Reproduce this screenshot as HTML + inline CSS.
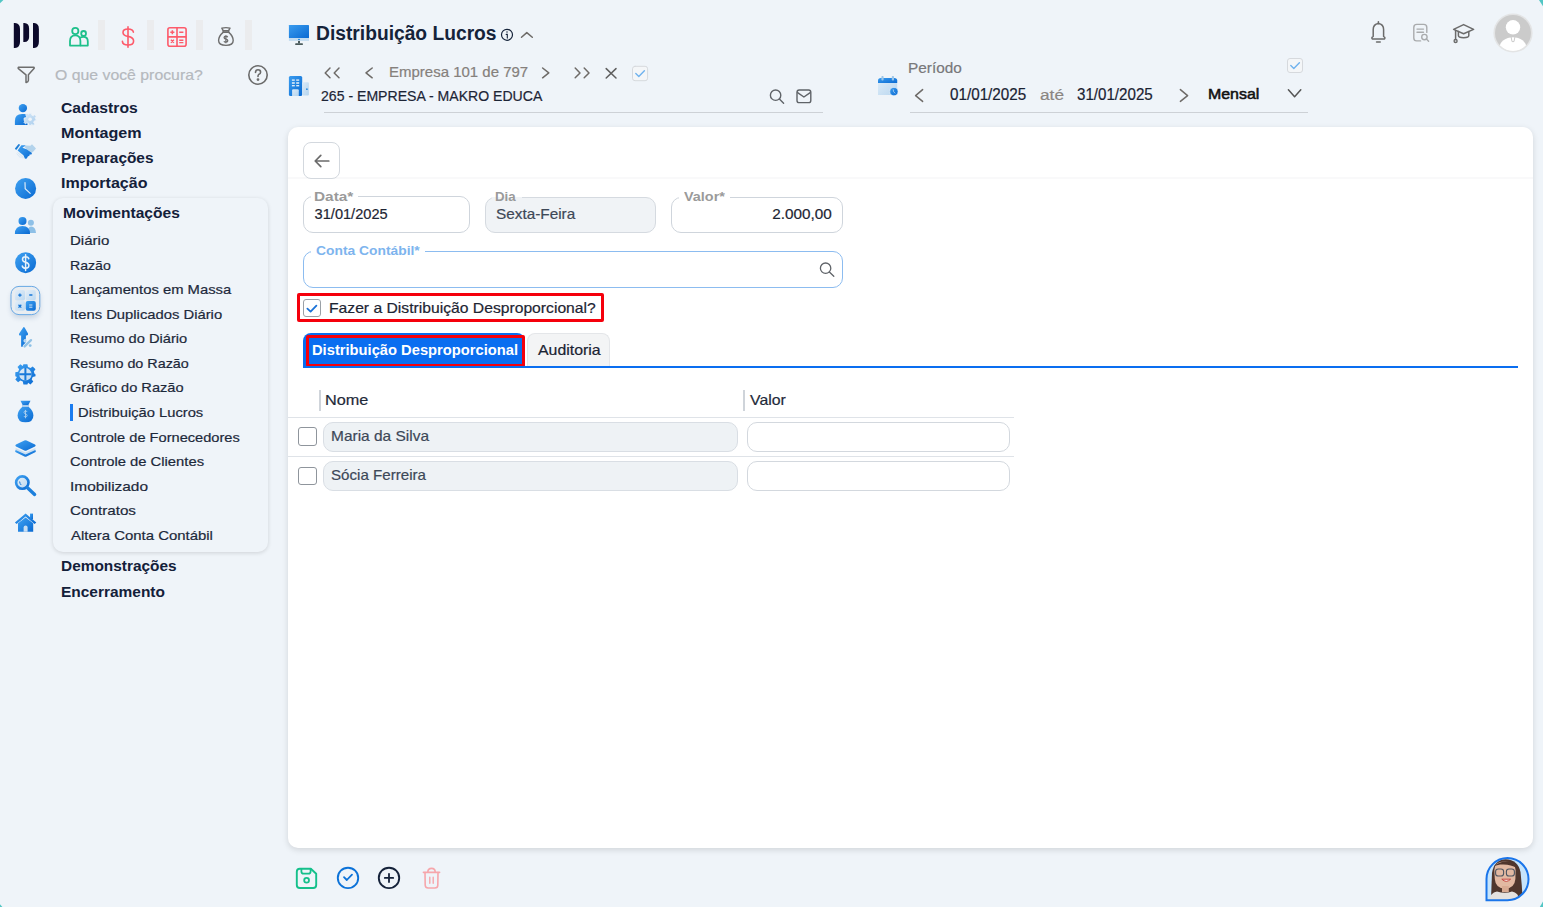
<!DOCTYPE html>
<html><head><meta charset="utf-8"><title>Distribuição Lucros</title>
<style>
html,body{margin:0;padding:0;}
body{width:1543px;height:907px;overflow:hidden;position:relative;background:#eff4f9;font-family:"Liberation Sans",sans-serif;}
.tx{position:absolute;white-space:nowrap;}
.r{-webkit-text-stroke:0.2px currentColor;}
.ab{position:absolute;}
svg.ab{overflow:visible;}
.sep{position:absolute;top:20px;width:7px;height:30px;background:#ebecee;}
.panel{position:absolute;left:53px;top:198px;width:215px;height:354px;border-radius:10px;background:#eff4f9;box-shadow:0 1px 4px rgba(0,0,0,.14);}
.card{position:absolute;left:288px;top:126.5px;width:1245px;height:721.5px;background:#fff;border-radius:10px;box-shadow:0 2px 6px rgba(0,0,0,.13);}
.fld{position:absolute;box-sizing:border-box;border:1px solid #cfd5dc;border-radius:10px;background:#fff;}
.lbl{position:absolute;height:6px;background:#fff;}
.rowline{position:absolute;left:288px;width:726px;height:1px;background:#dfe3e8;}
.chk{position:absolute;box-sizing:border-box;width:18px;height:18px;border:1px solid #8f959c;border-radius:3px;background:#fff;}

</style></head><body>
<!-- corner teal marks -->
<svg class="ab" style="left:0;top:0;z-index:5" width="1543" height="907" viewBox="0 0 1543 907">
  <path d="M0 0 L3.4 0 L0 3.2 Z" fill="#52c6c4"/>
  <path d="M1539 0 L1543 0 L1543 6.2 Z" fill="#52c6c4"/>
  <path d="M0 904.2 L2.4 907 L0 907 Z" fill="#52c6c4"/>
  <path d="M1543 901.6 L1543 907 L1539.8 907 Z" fill="#52c6c4"/>
</svg>
<!-- logo -->
<svg class="ab" style="left:0;top:0" width="60" height="60" viewBox="0 0 60 60">
  <path d="M13.8 22.9 L15 22.9 Q20 23.3 20 29 L20 42 Q20 47.6 15 48 L13.8 48 Z" fill="#0c0a2b"/>
  <path d="M23.3 22.9 L24.4 22.9 Q29.1 23.3 29.1 28.5 L29.1 37 Q29.1 41.7 24.4 42.1 L23.3 42.1 Z" fill="#0c0a2b"/>
  <path d="M33 22.9 L34.2 22.9 Q38.9 23.3 38.9 29 L38.9 42 Q38.9 47.6 34.2 48 L33 48 Z" fill="#0c0a2b"/>
</svg>
<!-- top module icons -->
<div class="sep" style="left:98px"></div>
<div class="sep" style="left:147px"></div>
<div class="sep" style="left:196px"></div>
<div class="sep" style="left:245px"></div>
<svg class="ab" style="left:66px;top:24px" width="26" height="26" viewBox="0 0 26 26" fill="none" stroke="#1ec08b" stroke-width="1.8" stroke-linejoin="round">
  <circle cx="9.3" cy="7" r="3.1"/>
  <circle cx="17.6" cy="9.4" r="2.4"/>
  <path d="M4 21.6 L4 17 Q4 11.4 9.3 11.4 Q14.4 11.4 14.4 17 L14.4 21.6 Z"/>
  <path d="M14.1 13.8 Q15 12.9 17.4 12.9 Q21.8 12.9 21.8 17.4 L21.8 21.6 L14.4 21.6"/>
</svg>
<svg class="ab" style="left:118px;top:25px" width="20" height="24" viewBox="0 0 20 24" fill="none" stroke="#fd5b6b" stroke-width="1.6" stroke-linecap="round">
  <path d="M10 1.9 L10 22.2"/>
  <path d="M15.4 7.2 Q15 4 10 4 Q5 4 5 7.4 Q5 10.4 10 11.4 Q15.6 12.5 15.6 15.9 Q15.6 20 10 20 Q4.6 20 4.4 16.4"/>
</svg>
<svg class="ab" style="left:166px;top:26px" width="22" height="22" viewBox="0 0 22 22" fill="none" stroke="#fd5b6b" stroke-width="1.6">
  <rect x="1.9" y="1.7" width="18.2" height="18.5" rx="2"/>
  <path d="M11 1.7 V20.2 M1.9 10.9 H20.1"/>
  <path d="M4.3 6.3 H8.4 M6.35 4.3 V8.3 M13.2 6.3 H17.4" stroke-width="1.5"/>
  <path d="M4.9 13.7 L7.9 16.7 M7.9 13.7 L4.9 16.7 M13.2 14.2 H17.4 M13.2 16.6 H17.4" stroke-width="1.4"/>
</svg>
<svg class="ab" style="left:216px;top:26px" width="20" height="22" viewBox="0 0 20 22" fill="none" stroke="#6e6e6e" stroke-width="1.4" stroke-linejoin="round">
  <path d="M5.8 2.2 Q10 1 14 2.2 L12.6 4.7 L7.2 4.7 Z"/>
  <path d="M7.2 4.7 L12.6 4.7 L12.8 6.4 L7.1 6.4 Z"/>
  <path d="M7.1 6.4 Q2.6 10.2 2.6 14.6 Q2.6 19.4 10 19.4 Q17.2 19.4 17.2 14.6 Q17.2 10.2 12.8 6.4"/>
  <path d="M11.7 11.2 Q11.3 10.2 9.9 10.2 Q8.1 10.2 8.1 11.6 Q8.1 12.8 9.9 13.1 Q11.8 13.4 11.8 14.8 Q11.8 16.2 9.9 16.2 Q8.3 16.2 8 15.2 M9.9 9.2 V17.2" stroke-width="1.3"/>
</svg>
<!-- filter + help -->
<svg class="ab" style="left:14px;top:63px" width="24" height="24" viewBox="0 0 24 24" fill="none" stroke="#6e6e6e" stroke-width="1.5" stroke-linejoin="round">
  <path d="M4.6 4.2 L19.6 4.2 Q20.6 4.4 20 5.6 L14.4 11.8 L14.4 17.4 Q14.2 19.2 12.4 19.4 L12 19.4 L12 11.8 L4.4 5.6 Q3.8 4.6 4.6 4.2 Z"/>
</svg>
<svg class="ab" style="left:246px;top:63px" width="24" height="24" viewBox="0 0 24 24" fill="none" stroke="#6a6a6a" stroke-width="1.6" stroke-linecap="round">
  <circle cx="12" cy="12" r="9.2"/>
  <path d="M9.5 9.4 Q9.6 6.8 12 6.8 Q14.6 6.8 14.6 9.2 Q14.6 10.8 12.6 11.6 Q12 12 12 13.4"/>
  <circle cx="12" cy="16.6" r="0.6" fill="#6a6a6a"/>
</svg>

<!-- submenu panel -->
<div class="panel"></div>
<div class="ab" style="left:70px;top:404px;width:3px;height:17px;background:#1a7cf0"></div>
<!-- sidebar icons -->
<svg class="ab" style="left:0;top:90px" width="50" height="450" viewBox="0 90 50 450">
  <defs>
    <linearGradient id="gb" x1="0" y1="0" x2="1" y2="1">
      <stop offset="0" stop-color="#40a2f2"/><stop offset="1" stop-color="#0a6ad2"/>
    </linearGradient>
    <linearGradient id="gl" x1="0" y1="0" x2="1" y2="1">
      <stop offset="0" stop-color="#d8e9f7"/><stop offset="1" stop-color="#a9cdee"/>
    </linearGradient>
    <linearGradient id="gc" x1="0" y1="0" x2="1" y2="1">
      <stop offset="0" stop-color="#e3eef8"/><stop offset="1" stop-color="#bcd8f0"/>
    </linearGradient>
  </defs>
  <!-- user gear -->
  <circle cx="22.9" cy="108.1" r="4.2" fill="url(#gb)"/>
  <path d="M14.9 125 L14.9 121 Q14.9 114 22 114 L27.5 114 L27.5 125 Z" fill="url(#gb)"/>
  <g transform="translate(30.1 119.3)">
    <path d="M-1.3 -6 L1.3 -6 L1.6 -4.2 L3.2 -3.5 L4.6 -4.6 L6.1 -3 L5 -1.6 L5.6 0 L6 0 L6 1.3 L4.2 1.6 L3.5 3.2 L4.6 4.6 L3 6.1 L1.6 5 L1.3 6 L-1.3 6 L-1.6 4.2 L-3.2 3.5 L-4.6 4.6 L-6.1 3 L-5 1.6 L-6 1.3 L-6 -1.3 L-4.2 -1.6 L-3.5 -3.2 L-4.6 -4.6 L-3 -6.1 L-1.6 -5 Z" fill="url(#gl)" stroke="#eff4f9" stroke-width="0.8"/>
    <circle r="1.8" fill="#eff4f9"/>
  </g>
  <!-- handshake -->
  <path d="M24 146.6 L26 145.4 L30.4 145.8 L32 144.2 L36 148.4 L33.4 151.4 L31.8 152.8 L27 149.4 Z" fill="#b3d3ec"/>
  <path d="M14.9 148.4 L18.6 144 L20.2 144.8 L16.8 149.6 Q15.4 149.8 14.9 148.4 Z" fill="#1f7fd6"/>
  <path d="M17.6 150.6 L20.4 146.4 L21.4 145.2 L25.8 145.2 L22.4 147.8 L26.6 149.2 L32 153 L31.4 154.4 L29.6 154.4 L29.4 155.8 L27.8 156.4 L26.8 158.6 L25 158.8 L23.4 155.2 Z" fill="url(#gb)"/>
  <path d="M17.4 152.4 L22.8 158.4 M19.2 152.6 L23.6 157.6 M16.6 153.6 L20.4 157.8" stroke="#cfe2f3" stroke-width="0.9" opacity="0.8"/>
  <!-- clock -->
  <circle cx="25.6" cy="188.4" r="10.5" fill="url(#gb)"/>
  <path d="M25 182.6 L25.2 188.8 L30.2 193.4" fill="none" stroke="#dceaf7" stroke-width="1.2" stroke-linecap="round"/>
  <!-- people -->
  <circle cx="30.9" cy="222.7" r="3" fill="#8ec0e7"/>
  <path d="M28 233 L28 230 Q28.8 226.6 31.2 226.6 Q35.6 226.8 36 233 Z" fill="#8ec0e7"/>
  <circle cx="22.5" cy="220.9" r="4" fill="url(#gb)"/>
  <path d="M14.9 234 Q14.9 226 22.5 226 Q30 226 30 234 Z" fill="url(#gb)"/>
  <!-- dollar -->
  <circle cx="25.6" cy="262.7" r="10.5" fill="url(#gb)"/>
  <path d="M28.8 258.8 Q28.3 256.8 25.6 256.8 Q22.5 256.8 22.5 259.3 Q22.5 261.6 25.6 262.3 Q28.9 263 28.9 265.5 Q28.9 268.2 25.6 268.2 Q22.7 268.2 22.3 266 M25.6 254.8 V270.4" fill="none" stroke="#e7f1fa" stroke-width="1.5" stroke-linecap="round"/>
  <!-- calculator active -->
  <rect x="11" y="286.4" width="28.8" height="28.2" rx="8" fill="#e9edf1" stroke="#6aaae6" stroke-width="1"/>
  <rect x="14.9" y="290.1" width="10.1" height="10.3" rx="2" fill="url(#gc)"/>
  <rect x="25.7" y="290.1" width="10.1" height="10.3" rx="2" fill="url(#gc)"/>
  <rect x="14.9" y="300.9" width="10.1" height="9.8" rx="2" fill="url(#gc)"/>
  <rect x="25.7" y="300.9" width="10.1" height="9.8" rx="2" fill="url(#gb)"/>
  <path d="M18.2 295.1 H21.6 M19.9 293.4 V296.8 M29.2 295 H32.4 M18.5 304.8 L21.3 307.6 M21.3 304.8 L18.5 307.6" stroke="#1677d8" stroke-width="1.3"/>
  <path d="M29.2 305 H32.4 M29.2 307.2 H32.4" stroke="#cfe3f6" stroke-width="1"/>
  <!-- arrow percent -->
  <path d="M23.4 327.2 Q24 326.8 24.6 327.6 L28 333.6 Q28.6 335.6 26.6 335.6 L25.9 335.6 L25.9 346.8 L21.1 346.8 L21.1 335.6 L20.4 335.6 Q18.4 335.6 19.2 333.6 Z" fill="url(#gb)"/>
  <path d="M24.6 346.4 L31 340.2" stroke="#eff4f9" stroke-width="3.8" stroke-linecap="round"/>
  <path d="M24.6 346.4 L31 340.2" stroke="#92c2e6" stroke-width="2.4" stroke-linecap="round"/>
  <circle cx="25.3" cy="340.8" r="1.5" fill="#a9cfec" stroke="#eff4f9" stroke-width="0.6"/>
  <circle cx="30.2" cy="345.6" r="1.4" fill="#8cc0e6"/>
  <!-- gear plus -->
  <g transform="translate(25.4 374.3)">
    <path d="M-2 -10.1 L2 -10.1 L2.6 -7.2 L5.1 -6.2 L7.3 -7.9 L10.1 -5.1 L8.4 -2.7 L9.3 -0.3 L10.1 0 L10.1 2 L7.3 2.6 L6.3 5.1 L7.9 7.3 L5.1 10.1 L2.7 8.4 L2 10.1 L-2 10.1 L-2.6 7.3 L-5.1 6.3 L-7.3 7.9 L-10.1 5.1 L-8.4 2.7 L-10.1 2 L-10.1 -2 L-7.3 -2.6 L-6.3 -5.1 L-7.9 -7.3 L-5.1 -10.1 L-2.7 -8.4 Z" fill="url(#gb)"/>
    <circle r="6.2" fill="url(#gc)"/>
    <path d="M-6.2 0 H6.2 M0 -6.2 V6.2" stroke="#1a7ad9" stroke-width="2"/>
  </g>
  <!-- money bag -->
  <path d="M20.5 400.8 L30.5 400.8 L28.4 405 L22.6 405 Z" fill="url(#gb)"/>
  <rect x="22" y="405" width="7" height="2" fill="#a9cdee"/>
  <path d="M22.2 407 L28.8 407 Q33.4 411 33.4 415.4 Q33.4 422.2 25.5 422.2 Q17.6 422.2 17.6 415.4 Q17.6 411 22.2 407 Z" fill="url(#gb)"/>
  <path d="M27.1 412 Q26.8 411 25.5 411 Q24 411 24 412.4 Q24 413.5 25.5 413.9 Q27.1 414.3 27.1 415.6 Q27.1 416.9 25.5 416.9 Q24.1 416.9 23.9 416 M25.5 409.9 V418.3" fill="none" stroke="#b9d7f0" stroke-width="0.8"/>
  <!-- layers -->
  <path d="M16.2 449.6 L25.5 454 L34.8 449.6 L35.6 450.6 Q36.4 451.6 35.2 452.2 L26.6 456.4 Q25.5 456.9 24.4 456.4 L15.8 452.2 Q14.6 451.6 15.4 450.6 Z" fill="url(#gb)"/>
  <path d="M15.6 448 L25.5 452.6 L35.4 448 L35.4 450 L25.5 454.4 L15.6 450 Z" fill="#c9def1"/>
  <path d="M16 444.6 L24.4 440.4 Q25.5 439.9 26.6 440.4 L35 444.6 Q36.4 445.5 35 446.4 L26.6 450.5 Q25.5 451 24.4 450.5 L16 446.4 Q14.6 445.5 16 444.6 Z" fill="url(#gb)"/>
  <!-- search -->
  <circle cx="22.3" cy="482.6" r="6.2" fill="url(#gc)" stroke="url(#gb)" stroke-width="2.6"/>
  <path d="M27.2 487.6 L34.6 494.4" stroke="#1c7fdc" stroke-width="3.4" stroke-linecap="round"/>
  <path d="M19.6 481.5 Q19.8 483.8 21.2 485" stroke="#1a7ad9" stroke-width="1" fill="none"/>
  <!-- home -->
  <path d="M14.9 522.4 L25.6 513.5 L36.3 522.4 L34.6 523.9 L25.6 516.6 L16.6 523.9 Z" fill="url(#gb)"/>
  <rect x="30" y="513.6" width="3" height="5.6" fill="url(#gb)"/>
  <path d="M18 523.3 L25.6 517.6 L33.2 523.3 L33.2 531.7 L18 531.7 Z" fill="url(#gb)"/>
  <path d="M23.6 531.7 L23.6 527.5 Q23.6 525.6 25.6 525.6 Q27.6 525.6 27.6 527.5 L27.6 531.7 Z" fill="#c9def2"/>
</svg>
<div class="ab" style="left:11px;top:287px;width:29px;height:28px;border-radius:8px;box-shadow:0 3px 5px rgba(40,80,130,.18);z-index:-0"></div>
<!-- header: title icons -->
<svg class="ab" style="left:280px;top:15px" width="270" height="110" viewBox="280 15 270 110">
  <defs>
    <linearGradient id="gb2" x1="0" y1="0" x2="1" y2="1">
      <stop offset="0" stop-color="#3a9cef"/><stop offset="1" stop-color="#0a6ad2"/>
    </linearGradient>
    <linearGradient id="gl2" x1="0" y1="0" x2="1" y2="1">
      <stop offset="0" stop-color="#dcebf8"/><stop offset="1" stop-color="#b3d3ee"/>
    </linearGradient>
  </defs>
  <!-- monitor -->
  <rect x="288.9" y="24.9" width="20.1" height="13.1" rx="0.6" fill="url(#gb2)"/>
  <rect x="288.9" y="38" width="20.1" height="2.9" fill="#c3dcf0"/>
  <ellipse cx="299" cy="39.4" rx="1.1" ry="0.6" fill="#2a8ce0"/>
  <rect x="298" y="40.9" width="2" height="2.5" fill="#4b5b5c"/>
  <rect x="295.2" y="43.2" width="7.7" height="1.8" rx="0.6" fill="#4b5b5c"/>
  <!-- info -->
  <circle cx="507" cy="34.8" r="5.5" fill="none" stroke="#15233a" stroke-width="1.2"/>
  <circle cx="507" cy="32.1" r="0.75" fill="#15233a"/>
  <path d="M506.2 34.4 L507.3 34.4 L507.3 38.1" fill="none" stroke="#15233a" stroke-width="1.1" stroke-linecap="round"/>
  <!-- chevron up -->
  <path d="M521.5 37.3 L526.8 32.6 L532.3 37.3" fill="none" stroke="#6e6b68" stroke-width="1.5" stroke-linecap="round" stroke-linejoin="round"/>
  <!-- building -->
  <rect x="288.9" y="76" width="13.3" height="19.9" rx="1.5" fill="url(#gb2)"/>
  <rect x="302.2" y="82.2" width="6.7" height="13.2" rx="1" fill="url(#gl2)"/>
  <circle cx="306.9" cy="89.2" r="0.9" fill="#2a8ce0"/>
  <g fill="#dcebf8">
    <rect x="291.9" y="79.4" width="2.9" height="1.4"/><rect x="296.2" y="79.4" width="3" height="1.4"/>
    <rect x="291.9" y="82.2" width="2.9" height="1.6"/><rect x="296.2" y="82.2" width="3" height="1.6"/>
    <rect x="291.9" y="85" width="2.9" height="1.4"/><rect x="296.2" y="85" width="3" height="1.4"/>
  </g>
  <path d="M292.1 95.9 L292.1 90.3 Q292.1 89.2 293.2 89.2 L297.7 89.2 Q298.8 89.2 298.8 90.3 L298.8 95.9 Z" fill="url(#gl2)"/>
</svg>
<!-- empresa nav icons -->
<svg class="ab" style="left:315px;top:60px" width="520" height="60" viewBox="315 60 520 60" fill="none" stroke="#6e6b68" stroke-width="1.5" stroke-linecap="round" stroke-linejoin="round">
  <path d="M330 68 L325.2 72.9 L330 77.8 M339 68 L334.2 72.9 L339 77.8"/>
  <path d="M372.2 68 L366 72.9 L372.2 77.8"/>
  <path d="M542.6 68 L548.8 72.9 L542.6 77.8"/>
  <path d="M575.2 68 L580 72.9 L575.2 77.8 M584.2 68 L589 72.9 L584.2 77.8"/>
  <path d="M606.2 68.6 L616 78 M616 68.6 L606.2 78" stroke="#5f5f5f"/>
  <rect x="632.5" y="66.3" width="15.1" height="14.4" rx="2.5" stroke="#d6d9dd" stroke-width="1" fill="#f4f6f8"/>
  <path d="M635.8 73.6 L638.8 76.4 L644.4 70.8" stroke="#6fb2ee" stroke-width="1.4"/>
  <!-- search -->
  <circle cx="775.6" cy="95.2" r="5.2" stroke="#5f6368" stroke-width="1.4"/>
  <path d="M779.4 99 L783.6 103.2" stroke="#5f6368" stroke-width="1.4"/>
  <!-- mail -->
  <rect x="797" y="90" width="13.8" height="12.6" rx="2.2" stroke="#5f6368" stroke-width="1.4"/>
  <path d="M797.6 92.6 L803.9 97 L810.2 92.6" stroke="#5f6368" stroke-width="1.4"/>
</svg>
<div class="ab" style="left:324px;top:112px;width:499px;height:1px;background:#cdd1d6"></div>

<!-- periodo -->
<svg class="ab" style="left:870px;top:50px" width="450" height="70" viewBox="870 50 450 70">
  <defs>
    <linearGradient id="gb3" x1="0" y1="0" x2="1" y2="1">
      <stop offset="0" stop-color="#3a9cef"/><stop offset="1" stop-color="#0a6ad2"/>
    </linearGradient>
    <linearGradient id="gl3" x1="0" y1="0" x2="1" y2="1">
      <stop offset="0" stop-color="#e0eef9"/><stop offset="1" stop-color="#b9d6ef"/>
    </linearGradient>
  </defs>
  <path d="M878 94.9 L878 81 Q878 77.9 881 77.9 L894.2 77.9 Q897.2 77.9 897.2 81 L897.2 94.9 Z" fill="url(#gl3)"/>
  <path d="M878 83.1 L878 80.6 Q878 77.9 881 77.9 L894.2 77.9 Q897.2 77.9 897.2 80.6 L897.2 83.1 Z" fill="url(#gb3)"/>
  <rect x="881.4" y="76" width="2.2" height="4.6" rx="0.8" fill="#9cc6e8"/>
  <rect x="891.8" y="76" width="2.2" height="4.6" rx="0.8" fill="#9cc6e8"/>
  <circle cx="893.9" cy="91.6" r="4.1" fill="url(#gb3)" stroke="#eff4f9" stroke-width="0.6"/>
  <path d="M893.2 89.4 L893.6 91.6 L895.2 93.4" fill="none" stroke="#cfe3f6" stroke-width="0.7"/>
  <g fill="none" stroke="#6e6b68" stroke-width="1.5" stroke-linecap="round" stroke-linejoin="round">
    <path d="M922.6 89.6 L915.6 95.6 L922.6 101.4"/>
    <path d="M1180.4 89.6 L1187.6 95.6 L1180.4 101.4"/>
    <path d="M1288.4 89.8 L1294.6 96.8 L1300.8 89.8" stroke="#555"/>
  </g>
  <rect x="1287.5" y="58.5" width="15" height="14" rx="2.5" stroke="#d6d9dd" stroke-width="1" fill="#f4f6f8"/>
  <path d="M1290.8 65.6 L1293.8 68.4 L1299.4 62.8" fill="none" stroke="#6fb2ee" stroke-width="1.4" stroke-linecap="round" stroke-linejoin="round"/>
</svg>
<div class="ab" style="left:910px;top:112px;width:398px;height:1px;background:#cdd1d6"></div>

<!-- right top icons -->
<svg class="ab" style="left:1360px;top:10px" width="180" height="50" viewBox="1360 10 180 50" fill="none" stroke-linecap="round" stroke-linejoin="round">
  <!-- bell -->
  <path d="M1373.2 36.4 L1373.2 29.6 Q1373.2 24 1378.4 23.4 Q1383.6 24 1383.6 29.6 L1383.6 36.4 Q1385.6 37.6 1384.6 38.9 L1372.2 38.9 Q1371.2 37.6 1373.2 36.4 Z" stroke="#6b6b6b" stroke-width="1.5"/>
  <path d="M1378.4 21.8 L1378.4 23.4 M1376.6 42 L1380.2 42" stroke="#6b6b6b" stroke-width="1.6"/>
  <!-- doc search -->
  <path d="M1420.6 40.9 L1416.6 40.9 Q1413.8 40.9 1413.8 38 L1413.8 27.4 Q1413.8 24.4 1416.8 24.4 L1423.8 24.4 Q1426.8 24.4 1426.8 27.4 L1426.8 32.4" stroke="#a9abad" stroke-width="1.4"/>
  <path d="M1417 29.1 L1423.5 29.1 M1417 32.2 L1423.5 32.2" stroke="#a9abad" stroke-width="1.4"/>
  <circle cx="1424.4" cy="37.1" r="2.7" stroke="#a9abad" stroke-width="1.4"/>
  <path d="M1426.4 39.1 L1428.6 41.3" stroke="#a9abad" stroke-width="1.4"/>
  <!-- grad cap -->
  <path d="M1453.6 29.4 L1463.6 24.6 L1473.6 29.4 L1463.6 33.8 Z" stroke="#6b6b6b" stroke-width="1.5"/>
  <path d="M1458.4 31.6 L1458.4 35.6 Q1458.4 37.8 1463.6 37.8 Q1468.8 37.8 1468.8 35.6 L1468.8 31.6" stroke="#6b6b6b" stroke-width="1.5"/>
  <path d="M1455.6 30.4 L1455.6 39.6" stroke="#6b6b6b" stroke-width="1.5"/>
  <circle cx="1455.6" cy="41" r="1.5" stroke="#6b6b6b" stroke-width="1.4"/>
</svg>
<!-- avatar -->
<svg class="ab" style="left:1490px;top:10px" width="46" height="46" viewBox="1490 10 46 46">
  <defs><clipPath id="avc"><circle cx="1513" cy="33" r="18"/></clipPath></defs>
  <circle cx="1513" cy="33" r="19.6" fill="#e3e4e5"/>
  <circle cx="1513" cy="33" r="18" fill="#cbcbcb"/>
  <g clip-path="url(#avc)">
    <circle cx="1513" cy="27.3" r="7.2" fill="#fff"/>
    <ellipse cx="1513" cy="47.4" rx="13.4" ry="10.2" fill="#fff"/>
    <path d="M1511 36.4 L1512 41.6 L1514 41.6 L1515 36.4" fill="none" stroke="#cbcbcb" stroke-width="1"/>
  </g>
</svg>
<!-- main card -->
<div class="card"></div>
<div class="ab" style="left:288px;top:177px;width:1245px;height:2px;background:#f9f9fa"></div>
<!-- back button -->
<div class="ab" style="left:303px;top:142px;width:37px;height:37px;box-sizing:border-box;border:1px solid #d3d8de;border-radius:8px;background:#fff"></div>
<svg class="ab" style="left:303px;top:142px" width="37" height="37" viewBox="303 142 37 37" fill="none" stroke="#6b6b6b" stroke-width="1.7" stroke-linecap="round" stroke-linejoin="round">
  <path d="M328.8 161 L315.4 161 M320.8 155.4 L315.2 161 L320.8 166.6"/>
</svg>
<!-- fields -->
<div class="fld" style="left:303px;top:196px;width:167px;height:37px"></div>
<div class="lbl" style="left:310.5px;top:193px;width:47px"></div>
<div class="fld" style="left:485px;top:196.5px;width:171px;height:36px;background:#f0f3f6;border-color:#d5dae0"></div>
<div class="lbl" style="left:492px;top:193px;width:30px;background:#fff;height:4px"></div>
<div class="ab" style="left:492px;top:196.5px;width:30px;height:3px;background:#f0f3f6"></div>
<div class="fld" style="left:671px;top:196.5px;width:172px;height:36px"></div>
<div class="lbl" style="left:678.5px;top:193px;width:51px"></div>
<div class="fld" style="left:303px;top:251px;width:540px;height:37px;border-color:#8cbcf0"></div>
<div class="lbl" style="left:310.5px;top:248px;width:114px"></div>
<svg class="ab" style="left:815px;top:258px" width="24" height="24" viewBox="815 258 24 24" fill="none" stroke="#5f6368" stroke-width="1.3" stroke-linecap="round">
  <circle cx="825.6" cy="268.2" r="5.2"/>
  <path d="M829.4 272 L833.8 276.2"/>
</svg>
<!-- red box + checkbox -->
<div class="ab" style="left:297px;top:293px;width:307px;height:29px;box-sizing:border-box;border:3px solid #f5000c;border-radius:2px"></div>
<div class="ab" style="left:303.3px;top:299.3px;width:17.5px;height:18px;box-sizing:border-box;border:1px solid #9aa0a6;border-radius:3px;background:#fff"></div>
<svg class="ab" style="left:303px;top:299px" width="18" height="18" viewBox="303 299 18 18" fill="none" stroke="#1a72d8" stroke-width="1.8" stroke-linecap="round" stroke-linejoin="round">
  <path d="M307.4 308.6 L310.6 311.6 L316.4 305.6"/>
</svg>
<!-- tabs -->
<div class="ab" style="left:303px;top:333px;width:222px;height:34px;background:#0a6ef0;border-radius:8px 8px 0 0"></div>
<div class="ab" style="left:306px;top:335px;width:219px;height:31.5px;box-sizing:border-box;border:3px solid #f5000c;border-radius:2px"></div>
<div class="ab" style="left:527px;top:333px;width:83px;height:33px;box-sizing:border-box;background:#f3f4f5;border:1px solid #e4e6e9;border-bottom:none;border-radius:8px 8px 0 0"></div>
<div class="ab" style="left:303px;top:366px;width:1215px;height:2px;background:#0a6ef0"></div>
<!-- table -->
<div class="ab" style="left:319.2px;top:390px;width:2px;height:21px;background:#cfd4da"></div>
<div class="ab" style="left:743.2px;top:390px;width:2px;height:21px;background:#cfd4da"></div>
<div class="rowline" style="top:417px"></div>
<div class="rowline" style="top:456px"></div>
<div class="chk" style="left:298.2px;top:427.2px;width:18.6px;height:18.4px"></div>
<div class="chk" style="left:298.2px;top:466.7px;width:18.6px;height:18.4px"></div>
<div class="fld" style="left:323px;top:422px;width:415px;height:30px;background:#eef2f5;border-color:#d9dee4;border-radius:10px"></div>
<div class="fld" style="left:323px;top:461px;width:415px;height:30px;background:#eef2f5;border-color:#d9dee4;border-radius:10px"></div>
<div class="fld" style="left:747px;top:422px;width:263px;height:30px;border-color:#d3d8de;border-radius:10px"></div>
<div class="fld" style="left:747px;top:461px;width:263px;height:30px;border-color:#d3d8de;border-radius:10px"></div>

<!-- bottom toolbar -->
<svg class="ab" style="left:290px;top:860px" width="160" height="37" viewBox="290 860 160 37" fill="none" stroke-linecap="round" stroke-linejoin="round">
  <path d="M299.8 868.8 L310.8 868.8 L316.2 873.8 L316.2 885 Q316.2 888 313.2 888 L299.8 888 Q296.8 888 296.8 885 L296.8 871.8 Q296.8 868.8 299.8 868.8 Z" stroke="#15c08b" stroke-width="1.9"/>
  <path d="M301.4 868.8 L301.4 871.4 Q301.4 873.6 303.6 873.6 L308.4 873.6 Q310.6 873.6 310.6 871.4 L310.6 868.8" stroke="#15c08b" stroke-width="1.8"/>
  <circle cx="306.6" cy="880.2" r="2.4" stroke="#15c08b" stroke-width="1.8"/>
  <circle cx="348" cy="877.9" r="10.2" stroke="#0c72d8" stroke-width="1.9"/>
  <path d="M344 877.2 L346.8 880 L352 874.6" stroke="#0c72d8" stroke-width="1.8"/>
  <circle cx="389" cy="877.9" r="10.2" stroke="#15223a" stroke-width="1.9"/>
  <path d="M384.8 877.9 L393.2 877.9 M389 873.8 L389 882.1" stroke="#15223a" stroke-width="1.8"/>
  <path d="M423.4 872.4 L439.6 872.4" stroke="#f6a6ab" stroke-width="1.6"/>
  <path d="M427.8 872.2 Q427.8 868.4 431.6 868.4 Q435.2 868.4 435.2 872.2" stroke="#f6a6ab" stroke-width="1.6"/>
  <path d="M425 872.6 L425.2 885.2 Q425.4 888 428.2 888 L434.8 888 Q437.8 888 437.8 885.2 L438 872.6" stroke="#f6a6ab" stroke-width="1.6"/>
  <path d="M429.8 877.2 L429.8 883.2 M433.2 877.2 L433.2 883.2" stroke="#f6a6ab" stroke-width="1.4"/>
</svg>
<!-- chat avatar -->
<svg class="ab" style="left:1480px;top:850px" width="56" height="56" viewBox="1480 850 56 56">
  <defs><clipPath id="chc"><path d="M1486.5 900.2 L1486.5 879 A21 21.1 0 1 1 1507.5 900.2 Z"/></clipPath></defs>
  <path d="M1486.5 900.2 L1486.5 879 A21 21.1 0 1 1 1507.5 900.2 Z" fill="#c6e4fb"/>
  <g clip-path="url(#chc)">
    <path d="M1491 900 Q1491.5 885 1492 873 Q1494 860 1505.5 859.3 Q1518 860 1520.5 872 Q1522 886 1522.5 897 L1522 900 Z" fill="#4f362d"/>
    <path d="M1494.3 870 Q1494.3 861.6 1505 861.6 Q1515.6 861.6 1515.6 870 L1515.4 879 Q1514.6 888.6 1505 888.6 Q1495.6 888.6 1494.8 879 Z" fill="#e2b9a2"/>
    <path d="M1494 866 Q1500 860.6 1510 861.2 Q1516 862.4 1516.6 868 Q1510 863.6 1500 864.6 Z" fill="#4f362d"/>
    <rect x="1502" y="886" width="6.8" height="6" fill="#d8aa92"/>
    <path d="M1489 901 Q1490 892.6 1497 891.4 Q1505 894 1512 891.4 Q1518.4 892.2 1520 901 Z" fill="#e4e1df"/>
    <g fill="none" stroke="#505661" stroke-width="1.1">
      <rect x="1495.6" y="869" width="8" height="7" rx="2.6"/>
      <rect x="1506.4" y="869" width="8" height="7" rx="2.6"/>
    </g>
    <path d="M1501.8 879.2 Q1506.2 883.4 1510.6 879.2 Z" fill="#fff" stroke="#c3453e" stroke-width="1"/>
  </g>
  <path d="M1486.5 900.2 L1486.5 879 A21 21.1 0 1 1 1507.5 900.2 Z" fill="none" stroke="#1a75ea" stroke-width="2"/>
</svg>

<div class="tx" style="left:60.73px;top:101.00px;font-size:14.6px;line-height:14.6px;font-weight:700;color:#13203a;transform:scaleX(1.0743);transform-origin:left top;">Cadastros</div><div class="tx" style="left:60.69px;top:126.00px;font-size:14.6px;line-height:14.6px;font-weight:700;color:#13203a;transform:scaleX(1.1056);transform-origin:left top;">Montagem</div><div class="tx" style="left:60.94px;top:151.00px;font-size:14.6px;line-height:14.6px;font-weight:700;color:#13203a;transform:scaleX(1.0558);transform-origin:left top;">Preparações</div><div class="tx" style="left:60.90px;top:176.00px;font-size:14.6px;line-height:14.6px;font-weight:700;color:#13203a;transform:scaleX(1.1000);transform-origin:left top;">Importação</div><div class="tx" style="left:62.85px;top:206.00px;font-size:14.8px;line-height:14.8px;font-weight:700;color:#13203a;transform:scaleX(1.0527);transform-origin:left top;">Movimentações</div><div class="tx" style="left:60.74px;top:559.00px;font-size:14.6px;line-height:14.6px;font-weight:700;color:#13203a;transform:scaleX(1.0556);transform-origin:left top;">Demonstrações</div><div class="tx" style="left:60.74px;top:585.00px;font-size:14.6px;line-height:14.6px;font-weight:700;color:#13203a;transform:scaleX(1.0588);transform-origin:left top;">Encerramento</div><div class="tx r" style="left:69.69px;top:234.00px;font-size:13.6px;line-height:13.6px;font-weight:400;color:#1d293b;transform:scaleX(1.1059);transform-origin:left top;">Diário</div><div class="tx r" style="left:69.76px;top:259.00px;font-size:13.6px;line-height:13.6px;font-weight:400;color:#1d293b;transform:scaleX(1.0368);transform-origin:left top;">Razão</div><div class="tx r" style="left:69.71px;top:283.00px;font-size:13.6px;line-height:13.6px;font-weight:400;color:#1d293b;transform:scaleX(1.0884);transform-origin:left top;">Lançamentos em Massa</div><div class="tx r" style="left:69.71px;top:308.00px;font-size:13.6px;line-height:13.6px;font-weight:400;color:#1d293b;transform:scaleX(1.0884);transform-origin:left top;">Itens Duplicados Diário</div><div class="tx r" style="left:69.72px;top:332.00px;font-size:13.6px;line-height:13.6px;font-weight:400;color:#1d293b;transform:scaleX(1.0776);transform-origin:left top;">Resumo do Diário</div><div class="tx r" style="left:69.75px;top:357.00px;font-size:13.6px;line-height:13.6px;font-weight:400;color:#1d293b;transform:scaleX(1.0550);transform-origin:left top;">Resumo do Razão</div><div class="tx r" style="left:69.73px;top:381.00px;font-size:13.6px;line-height:13.6px;font-weight:400;color:#1d293b;transform:scaleX(1.0731);transform-origin:left top;">Gráfico do Razão</div><div class="tx r" style="left:78.42px;top:406.00px;font-size:13.6px;line-height:13.6px;font-weight:400;color:#1d293b;transform:scaleX(1.0833);transform-origin:left top;">Distribuição Lucros</div><div class="tx r" style="left:69.72px;top:431.00px;font-size:13.6px;line-height:13.6px;font-weight:400;color:#1d293b;transform:scaleX(1.0752);transform-origin:left top;">Controle de Fornecedores</div><div class="tx r" style="left:69.71px;top:455.00px;font-size:13.6px;line-height:13.6px;font-weight:400;color:#1d293b;transform:scaleX(1.0885);transform-origin:left top;">Controle de Clientes</div><div class="tx r" style="left:69.67px;top:480.00px;font-size:13.6px;line-height:13.6px;font-weight:400;color:#1d293b;transform:scaleX(1.1343);transform-origin:left top;">Imobilizado</div><div class="tx r" style="left:69.68px;top:504.00px;font-size:13.6px;line-height:13.6px;font-weight:400;color:#1d293b;transform:scaleX(1.1190);transform-origin:left top;">Contratos</div><div class="tx r" style="left:70.80px;top:529.00px;font-size:13.6px;line-height:13.6px;font-weight:400;color:#1d293b;transform:scaleX(1.0984);transform-origin:left top;">Altera Conta Contábil</div><div class="tx r" style="left:54.53px;top:68.00px;font-size:14.8px;line-height:14.8px;font-weight:400;color:#b5b9be;transform:scaleX(1.0693);transform-origin:left top;">O que você procura?</div><div class="tx" style="left:316.22px;top:24.00px;font-size:19.6px;line-height:19.6px;font-weight:700;color:#15233a;transform:scaleX(0.9813);transform-origin:left top;">Distribuição Lucros</div><div class="tx r" style="left:389.40px;top:64.00px;font-size:15.0px;line-height:15.0px;font-weight:400;color:#85807c;transform:scaleX(0.9993);transform-origin:left top;">Empresa 101 de 797</div><div class="tx r" style="left:321.09px;top:88.00px;font-size:15.4px;line-height:15.4px;font-weight:400;color:#1d2536;transform:scaleX(0.9145);transform-origin:left top;">265 - EMPRESA - MAKRO EDUCA</div><div class="tx r" style="left:908.28px;top:60.00px;font-size:15.0px;line-height:15.0px;font-weight:400;color:#78787a;transform:scaleX(1.0235);transform-origin:left top;">Período</div><div class="tx r" style="left:949.74px;top:87.00px;font-size:15.8px;line-height:15.8px;font-weight:400;color:#1a2232;transform:scaleX(0.9641);transform-origin:left top;">01/01/2025</div><div class="tx r" style="left:1039.58px;top:87.00px;font-size:15.4px;line-height:15.4px;font-weight:400;color:#8a8682;transform:scaleX(1.1200);transform-origin:left top;">até</div><div class="tx r" style="left:1077.14px;top:87.00px;font-size:15.8px;line-height:15.8px;font-weight:400;color:#1a2232;transform:scaleX(0.9577);transform-origin:left top;">31/01/2025</div><div class="tx r" style="left:1208.34px;top:86.00px;font-size:15.0px;line-height:15.0px;font-weight:400;color:#111111;transform:scaleX(1.0617);transform-origin:left top;-webkit-text-stroke:0.55px #111;">Mensal</div><div class="tx" style="left:314.36px;top:191.00px;font-size:12.4px;line-height:12.4px;font-weight:700;color:#9a9a9a;transform:scaleX(1.2400);transform-origin:left top;">Data*</div><div class="tx r" style="left:314.60px;top:207.00px;font-size:14.6px;line-height:14.6px;font-weight:400;color:#1d2533;transform:scaleX(1.0000);transform-origin:left top;">31/01/2025</div><div class="tx" style="left:495.43px;top:191.00px;font-size:12.4px;line-height:12.4px;font-weight:700;color:#9a9a9a;transform:scaleX(1.0737);transform-origin:left top;">Dia</div><div class="tx r" style="left:496.15px;top:207.00px;font-size:14.6px;line-height:14.6px;font-weight:400;color:#3e4857;transform:scaleX(1.0507);transform-origin:left top;">Sexta-Feira</div><div class="tx" style="left:684.10px;top:191.00px;font-size:12.4px;line-height:12.4px;font-weight:700;color:#9a9a9a;transform:scaleX(1.1629);transform-origin:left top;">Valor*</div><div class="tx r" style="right:711.60px;top:207.00px;font-size:14.6px;line-height:14.6px;font-weight:400;color:#1d2533;transform:scaleX(1.0473);transform-origin:right top;">2.000,00</div><div class="tx" style="left:315.70px;top:245.00px;font-size:12.4px;line-height:12.4px;font-weight:700;color:#7db4ee;transform:scaleX(1.1161);transform-origin:left top;">Conta Contábil*</div><div class="tx r" style="left:329.04px;top:301.00px;font-size:14.8px;line-height:14.8px;font-weight:400;color:#1d2533;transform:scaleX(1.0600);transform-origin:left top;">Fazer a Distribuição Desproporcional?</div><div class="tx" style="left:312.01px;top:343.00px;font-size:14.8px;line-height:14.8px;font-weight:700;color:#ffffff;transform:scaleX(0.9941);transform-origin:left top;">Distribuição Desproporcional</div><div class="tx r" style="left:537.50px;top:343.00px;font-size:14.8px;line-height:14.8px;font-weight:400;color:#1a2332;transform:scaleX(1.0712);transform-origin:left top;">Auditoria</div><div class="tx r" style="left:325.09px;top:393.00px;font-size:14.6px;line-height:14.6px;font-weight:400;color:#1f2a3a;transform:scaleX(1.1135);transform-origin:left top;">Nome</div><div class="tx r" style="left:750.00px;top:393.00px;font-size:14.6px;line-height:14.6px;font-weight:400;color:#1f2a3a;transform:scaleX(1.0848);transform-origin:left top;">Valor</div><div class="tx r" style="left:331.14px;top:429.00px;font-size:14.6px;line-height:14.6px;font-weight:400;color:#3d4858;transform:scaleX(1.0598);transform-origin:left top;">Maria da Silva</div><div class="tx r" style="left:331.16px;top:468.00px;font-size:14.6px;line-height:14.6px;font-weight:400;color:#3d4858;transform:scaleX(1.0363);transform-origin:left top;">Sócia Ferreira</div>
</body></html>
